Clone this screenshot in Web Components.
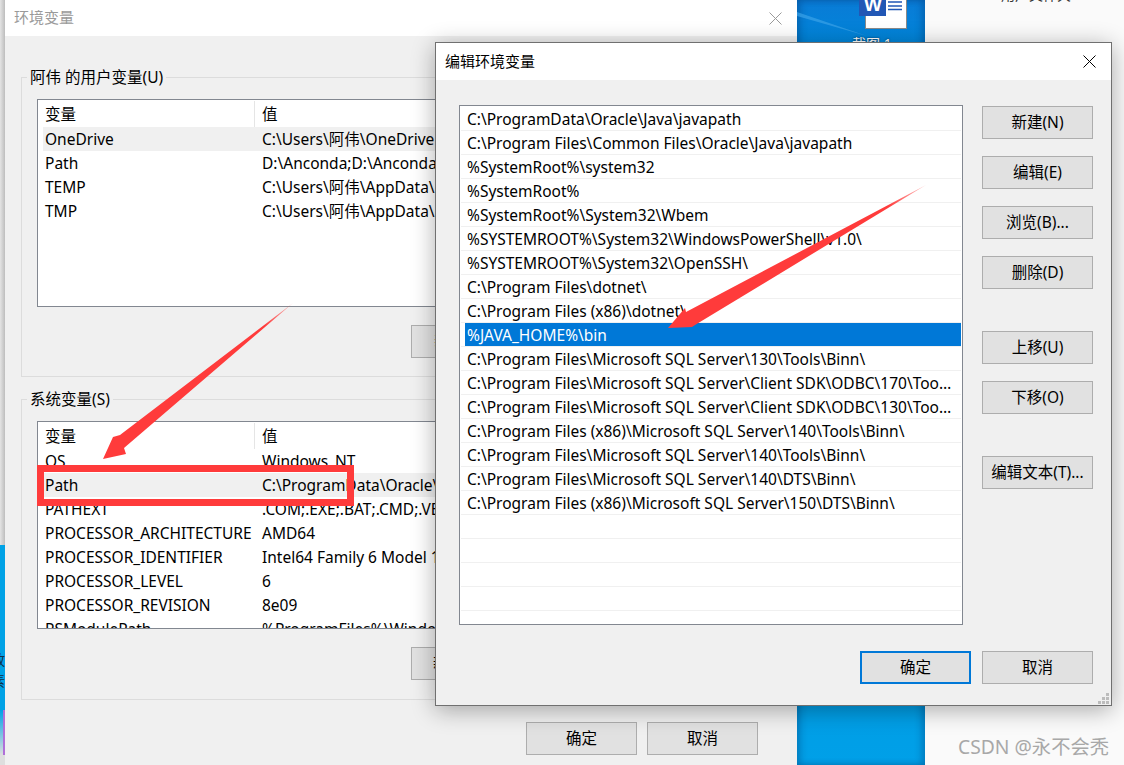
<!DOCTYPE html>
<html lang="zh">
<head>
<meta charset="utf-8">
<style>
  html, body { margin: 0; height: 100%; }
  body {
    width: 1124px; height: 765px; overflow: hidden; position: relative;
    background: #fafafa;
    font: 15.5px "Noto Sans", "Noto Sans CJK SC", sans-serif;
    color: #000;
  }
</style>
</head>
<body>
<desk-top></desk-top>

<env-window style="left:5px;top:0;width:792px;height:765px" title-text="环境变量" inactive>
  <div style="padding:41px 0 0 16px">
    <group-box label="阿伟 的用户变量(U)">
      <var-table id="user"></var-table>
      <win-button style="display:flex;margin:18px 0 0 374px">新建(N)...</win-button>
    </group-box>
    <group-box style="margin-top:22px;height:301px" label="系统变量(S)">
      <var-table id="sys"></var-table>
      <win-button style="display:flex;margin:18px 0 0 374px">新建(W)...</win-button>
    </group-box>
  </div>
  <div slot="foot" style="display:flex;justify-content:flex-end;gap:10px;padding:0 39px 10px 0">
    <win-button>确定</win-button>
    <win-button>取消</win-button>
  </div>
</env-window>

<env-window style="left:435px;top:42px;width:677px;height:664px" title-text="编辑环境变量" front>
  <edit-pane></edit-pane>
</env-window>

<red-marks></red-marks>

<script>
// bureau derriere les fenetres
class DeskTop extends HTMLElement {
  constructor() {
    super();
    this.attachShadow({ mode: 'open' });
    this.shadowRoot.innerHTML = `
      <style>
        :host { position: absolute; inset: 0; display: block; }
        .strip {
          position: absolute; left: 0; top: 0; width: 5px; height: 765px; overflow: hidden;
          background: linear-gradient(180deg, transparent 545px, #00a2e6 545px, #00a2e6 710px, #dedede 755px);
        }
        .edge { position: absolute; left: 0; top: 0; width: 5px; height: 545px; background: linear-gradient(90deg, #e4e4e4, #bdbdbd); }
        .purple { position: absolute; left: 3px; top: 710px; width: 2px; height: 45px; background: #b070d8; }
        .ch { position: absolute; left: -9px; font-size: 14px; line-height: 14px; color: #10304a; }
        .blue {
          position: absolute; left: 797px; top: 0; width: 128px; height: 765px; overflow: hidden;
          background: linear-gradient(180deg, #0a7bd6 0, #0086da 45px, #009be2 640px, #00a0e8 100%);
          box-shadow: inset -4px 0 6px rgba(0,40,90,.25), inset 4px 0 6px rgba(0,40,90,.25);
        }
        .streak { position: absolute; left: 0; top: 0; }
        .doc { position: absolute; left: 859px; top: 0; }
        .name { position: absolute; left: 852px; top: 37px; font-size: 14px; color: #fff; line-height: 14px; text-shadow: 0 0 2px #123; }
        .top { position: absolute; left: 1001px; top: -15px; font-size: 14px; line-height: 20px; color: #333; }
        .mark {
          position: absolute; left: 958px; top: 735px; color: #a8a8a8;
          font: 19.3px/24px "Noto Sans", "Noto Sans CJK SC", sans-serif;
        }
        .tick { position: absolute; left: 791px; top: 761px; width: 3px; height: 4px; background: #c4c4c4; }
      </style>
      <div class="strip">
        <div class="edge"></div>
        <div class="purple"></div>
        <div class="ch" style="top:653px">放</div>
        <div class="ch" style="top:674px">素</div>
      </div>
      <div class="blue">
        <svg class="streak" width="128" height="45"><path d="M0 12 L70 36 L0 16 Z" fill="#3aa2e8" opacity=".7"/></svg>
      </div>
      <svg class="doc" width="50" height="30" viewBox="0 0 50 30">
        <rect x="6.5" y="-3" width="41" height="31.5" fill="#fff" stroke="#8a8a8a"/>
        <rect x="0" y="-3" width="27" height="19" fill="#2257b5"/>
        <text x="14" y="11" text-anchor="middle" fill="#fff" font-family="Liberation Sans" font-weight="700" font-size="19">W</text>
        <path d="M29 2 H43 M29 6 H43 M29 9.5 H43" stroke="#2257b5" stroke-width="1.6"/>
      </svg>
      <div class="name">截图 1</div>
      <div class="top">用户文件夹</div>
      <div class="mark">CSDN @永不会秃</div>
      <div class="tick"></div>
    `;
  }
}

// fenetre avec barre de titre blanche
class EnvWindow extends HTMLElement {
  constructor() {
    super();
    this.attachShadow({ mode: 'open' });
  }
  connectedCallback() {
    const title = this.getAttribute('title-text') || '';
    this.shadowRoot.innerHTML = `
      <style>
        :host {
          position: absolute; display: flex; flex-direction: column; box-sizing: border-box;
          background: #f0f0f0;
        }
        :host([front]) { border: 1px solid #707070; box-shadow: 0 4px 22px rgba(0,0,0,.32); }
        .bar {
          flex: none; box-sizing: border-box; height: 36px; background: #fff; display: flex; align-items: center;
          justify-content: space-between; padding: 0 15px 3px 9px; font-size: 15px;
        }
        :host([inactive]) .bar { color: #9a9a9a; }
        :host([front]) .bar { height: 37px; padding-right: 15px; }
        .body { flex: 1; position: relative; }
        .foot { flex: none; }
        svg { display: block; }
        .bar svg { margin-top: 3px; }
        :host([inactive]) line { stroke: #9a9a9a; }
        .grip { display: none; position: absolute; right: 2px; bottom: 1px; }
        :host([front]) .grip { display: block; }
      </style>
      <div class="bar">
        <span>${title}</span>
        <svg width="13" height="13" viewBox="0 0 13 13"><line x1="0.5" y1="0.5" x2="12.5" y2="12.5" stroke="#000"/><line x1="12.5" y1="0.5" x2="0.5" y2="12.5" stroke="#000"/></svg>
      </div>
      <div class="body"><slot></slot></div>
      <div class="foot"><slot name="foot"></slot></div>
      <svg class="grip" width="11" height="11" fill="#bcbcbc">
        <rect x="8" y="0" width="3" height="3"/>
        <rect x="4" y="4" width="3" height="3"/><rect x="8" y="4" width="3" height="3"/>
        <rect x="0" y="8" width="3" height="3"/><rect x="4" y="8" width="3" height="3"/><rect x="8" y="8" width="3" height="3"/>
      </svg>
    `;
  }
}

class GroupBox extends HTMLElement {
  constructor() {
    super();
    this.attachShadow({ mode: 'open' });
  }
  connectedCallback() {
    this.shadowRoot.innerHTML = `
      <style>
        :host { display: block; position: relative; box-sizing: border-box; width: 760px; height: 300px; border: 1px solid #dcdcdc; padding: 21px 15px 0; }
        .label { position: absolute; left: 5px; top: -11px; padding: 0 3px; background: #f0f0f0; line-height: 20px; }
      </style>
      <div class="label">${this.getAttribute('label')}</div>
      <slot></slot>
    `;
  }
}

class VarTable extends HTMLElement {
  constructor() {
    super();
    this.attachShadow({ mode: 'open' });
  }
  connectedCallback() {
    const rows = this.id === 'user' ? [
      ['OneDrive', 'C:\\Users\\阿伟\\OneDrive'],
      ['Path', 'D:\\Anconda;D:\\Anconda\\Scripts'],
      ['TEMP', 'C:\\Users\\阿伟\\AppData\\Local\\Temp'],
      ['TMP', 'C:\\Users\\阿伟\\AppData\\Local\\Temp']
    ] : [
      ['OS', 'Windows_NT'],
      ['Path', 'C:\\ProgramData\\Oracle\\Java\\javapath'],
      ['PATHEXT', '.COM;.EXE;.BAT;.CMD;.VBS'],
      ['PROCESSOR_ARCHITECTURE', 'AMD64'],
      ['PROCESSOR_IDENTIFIER', 'Intel64 Family 6 Model 158'],
      ['PROCESSOR_LEVEL', '6'],
      ['PROCESSOR_REVISION', '8e09'],
      ['PSModulePath', '%ProgramFiles%\\WindowsPowerShell']
    ];
    const sel = this.id === 'user' ? 0 : 1;
    this.shadowRoot.innerHTML = `
      <style>
        :host { display: block; box-sizing: border-box; width: 720px; height: 208px; background: #fff; border: 1px solid #828790; overflow: hidden; }
        .head { display: flex; height: 27px; align-items: center; }
        .k { width: 217px; flex: none; box-sizing: border-box; padding-left: 7px; white-space: nowrap; overflow: hidden; }
        .v { flex: 1; padding-left: 7px; white-space: nowrap; overflow: hidden; }
        .head .k { border-right: 1px solid #e5e5e5; height: 26px; line-height: 27px; }
        .row { display: flex; height: 24px; line-height: 25px; margin-left: 5px; }
        .row .k { width: 212px; padding-left: 2px; }
        .row.on { background: #f0f0f0; }
      </style>
      <div class="head"><div class="k">变量</div><div class="v">值</div></div>
      ${rows.map((r, i) => `<div class="row${i === sel ? ' on' : ''}"><div class="k">${r[0]}</div><div class="v">${r[1]}</div></div>`).join('')}
    `;
  }
}

class WinButton extends HTMLElement {
  constructor() {
    super();
    this.attachShadow({ mode: 'open' });
    this.shadowRoot.innerHTML = `
      <style>
        :host {
          display: inline-flex; box-sizing: border-box; width: 111px; height: 33px; padding-bottom: 2px;
          align-items: center; justify-content: center;
          background: #e1e1e1; border: 1px solid #adadad; white-space: nowrap;
        }
        :host([primary]) { border: 2px solid #0078d7; }
      </style>
      <slot></slot>
    `;
  }
}

// contenu de la boite d'edition : liste + colonne de boutons
class EditPane extends HTMLElement {
  constructor() {
    super();
    this.attachShadow({ mode: 'open' });
    const paths = [
      'C:\\ProgramData\\Oracle\\Java\\javapath',
      'C:\\Program Files\\Common Files\\Oracle\\Java\\javapath',
      '%SystemRoot%\\system32',
      '%SystemRoot%',
      '%SystemRoot%\\System32\\Wbem',
      '%SYSTEMROOT%\\System32\\WindowsPowerShell\\v1.0\\',
      '%SYSTEMROOT%\\System32\\OpenSSH\\',
      'C:\\Program Files\\dotnet\\',
      'C:\\Program Files (x86)\\dotnet\\',
      '%JAVA_HOME%\\bin',
      'C:\\Program Files\\Microsoft SQL Server\\130\\Tools\\Binn\\',
      'C:\\Program Files\\Microsoft SQL Server\\Client SDK\\ODBC\\170\\Tools\\Binn\\',
      'C:\\Program Files\\Microsoft SQL Server\\Client SDK\\ODBC\\130\\Tools\\Binn\\',
      'C:\\Program Files (x86)\\Microsoft SQL Server\\140\\Tools\\Binn\\',
      'C:\\Program Files\\Microsoft SQL Server\\140\\Tools\\Binn\\',
      'C:\\Program Files\\Microsoft SQL Server\\140\\DTS\\Binn\\',
      'C:\\Program Files (x86)\\Microsoft SQL Server\\150\\DTS\\Binn\\',
      '', '', '', ''
    ];
    this.shadowRoot.innerHTML = `
      <style>
        :host { display: grid; grid-template-columns: 504px 111px; column-gap: 19px; padding: 25px 0 0 23px; }
        .list { box-sizing: border-box; height: 520px; background: #fff; border: 1px solid #828790; padding: 1px 1px 0 1px; }
        .it { box-sizing: border-box; height: 24px; line-height: 25px; padding: 0 8px 0 6px; border-bottom: 1px solid #f0f0f0; white-space: nowrap; overflow: hidden; text-overflow: ellipsis; }
        .it.on { background: linear-gradient(90deg, transparent 4px, #0078d7 4px); color: #fff; }
        .side { display: flex; flex-direction: column; padding-top: 1px; }
        .foot { grid-column: 1 / 3; display: flex; justify-content: flex-end; gap: 11px; margin-top: 26px; }
      </style>
      <div class="list">
        ${paths.map((p, i) => `<div class="it${i === 9 ? ' on' : ''}">${p}</div>`).join('')}
      </div>
      <div class="side">
        <win-button style="margin-bottom:17px">新建(N)</win-button>
        <win-button style="margin-bottom:17px">编辑(E)</win-button>
        <win-button style="margin-bottom:17px">浏览(B)...</win-button>
        <win-button style="margin-bottom:42px">删除(D)</win-button>
        <win-button style="margin-bottom:17px">上移(U)</win-button>
        <win-button style="margin-bottom:42px">下移(O)</win-button>
        <win-button>编辑文本(T)...</win-button>
      </div>
      <div class="foot">
        <win-button primary>确定</win-button>
        <win-button>取消</win-button>
      </div>
    `;
  }
}

// annotations rouges par-dessus la capture
class RedMarks extends HTMLElement {
  constructor() {
    super();
    this.attachShadow({ mode: 'open' });
    this.shadowRoot.innerHTML = `
      <style>
        :host { position: absolute; inset: 0; display: block; pointer-events: none; }
        svg { position: absolute; left: 0; top: 0; }
      </style>
      <svg width="1124" height="765">
        <defs>
          <linearGradient id="a1" x1="293" y1="303" x2="103" y2="459" gradientUnits="userSpaceOnUse">
            <stop offset="0" stop-color="#ff3b3b" stop-opacity=".3"/><stop offset=".15" stop-color="#ff3b3b"/>
          </linearGradient>
          <linearGradient id="a2" x1="926" y1="185" x2="668" y2="328" gradientUnits="userSpaceOnUse">
            <stop offset="0" stop-color="#ff3b3b" stop-opacity=".3"/><stop offset=".15" stop-color="#ff3b3b"/>
          </linearGradient>
        </defs>
        <path d="M293 303 L120 435 L113 437 L103 459 L126 454 L124 448 Z" fill="url(#a1)"/>
        <path d="M926 185 L686 312 L685 308 L668 328 L692 327 L695 325 Z" fill="url(#a2)"/>
        <rect x="40.5" y="468.5" width="310" height="34" fill="none" stroke="#ff3b3b" stroke-width="7"/>
      </svg>
    `;
  }
}

customElements.define('desk-top', DeskTop);
customElements.define('env-window', EnvWindow);
customElements.define('group-box', GroupBox);
customElements.define('var-table', VarTable);
customElements.define('win-button', WinButton);
customElements.define('edit-pane', EditPane);
customElements.define('red-marks', RedMarks);
</script>
</body>
</html>
